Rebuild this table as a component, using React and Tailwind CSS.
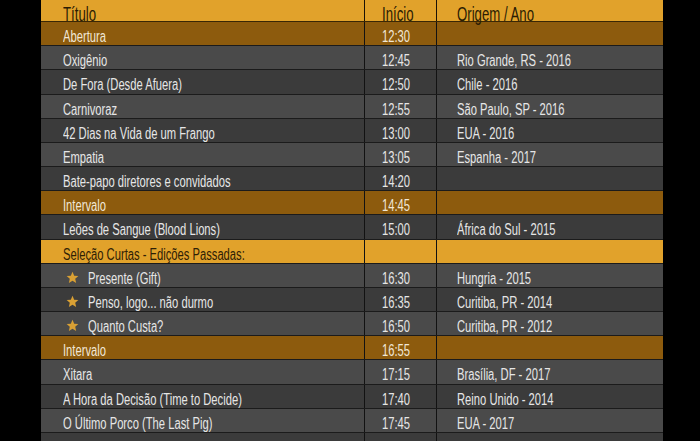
import React from "react";

const rows = [
  { t: "Abertura", h: "12:30", o: "", k: "brown" },
  { t: "Oxigênio", h: "12:45", o: "Rio Grande, RS - 2016", k: "light" },
  { t: "De Fora (Desde Afuera)", h: "12:50", o: "Chile - 2016", k: "dark" },
  { t: "Carnivoraz", h: "12:55", o: "São Paulo, SP - 2016", k: "light" },
  { t: "42 Dias na Vida de um Frango", h: "13:00", o: "EUA - 2016", k: "dark" },
  { t: "Empatia", h: "13:05", o: "Espanha - 2017", k: "light" },
  { t: "Bate-papo diretores e convidados", h: "14:20", o: "", k: "dark" },
  { t: "Intervalo", h: "14:45", o: "", k: "brown" },
  { t: "Leões de Sangue (Blood Lions)", h: "15:00", o: "África do Sul - 2015", k: "dark" },
  { t: "Seleção Curtas - Edições Passadas:", h: "", o: "", k: "gold" },
  { t: "Presente (Gift)", h: "16:30", o: "Hungria - 2015", k: "light", star: true },
  { t: "Penso, logo... não durmo", h: "16:35", o: "Curitiba, PR - 2014", k: "dark", star: true },
  { t: "Quanto Custa?", h: "16:50", o: "Curitiba, PR - 2012", k: "light", star: true },
  { t: "Intervalo", h: "16:55", o: "", k: "brown" },
  { t: "Xitara", h: "17:15", o: "Brasília, DF - 2017", k: "light" },
  { t: "A Hora da Decisão (Time to Decide)", h: "17:40", o: "Reino Unido - 2014", k: "dark" },
  { t: "O Último Porco (The Last Pig)", h: "17:45", o: "EUA - 2017", k: "light" },
  { t: "Debate com diretores e convidados", h: "18:10", o: "", k: "dark" },
];

const bg = {
  brown: "bg-[#8d5b0d] text-[#f1e7d6]",
  gold: "bg-[#e1a22b] text-[#2e2006]",
  light: "bg-[#4a4a4a] text-[#e6e6e6]",
  dark: "bg-[#3b3b3b] text-[#e6e6e6]",
};

function Star() {
  return (
    <svg width="13" height="13" viewBox="0 0 24 24" className="shrink-0">
      <polygon
        points="12,1.5 15.1,8.6 22.8,9.3 17,14.4 18.7,22 12,18 5.3,22 7,14.4 1.2,9.3 8.9,8.6"
        fill="#d9a034"
      />
    </svg>
  );
}

function T({ children, big }) {
  return (
    <span
      className={
        "inline-block whitespace-nowrap origin-left " +
        (big ? "text-[20px] scale-x-[0.66]" : "text-[16px] scale-x-[0.7]")
      }
    >
      {children}
    </span>
  );
}

export default function App() {
  return (
    <div
      className="w-[700px] h-[441px] bg-black overflow-hidden"
      style={{ fontFamily: '"Liberation Sans", Arial, sans-serif' }}
    >
      <div className="ml-[41px] w-[622px] -mt-[2px] flex flex-col">
        <div className="flex h-[24.17px] shrink-0 border-b border-[#3a2705] bg-[#e1a22b] text-[#2a1c04] leading-[20px]">
          <div className="w-[324px] border-r border-[#1a1206] pl-[22px] pt-[6px]">
            <T big>Título</T>
          </div>
          <div className="w-[72px] border-r border-[#1a1206] pl-[17px] pt-[6px]">
            <T big>Início</T>
          </div>
          <div className="flex-1 pl-[20px] pt-[6px]">
            <T big>Origem / Ano</T>
          </div>
        </div>
        {rows.map((r, i) => (
          <div
            key={i}
            className={
              "flex h-[24.17px] shrink-0 border-b border-[#1b1b1b] leading-[20px] " +
              bg[r.k]
            }
          >
            <div className="w-[324px] border-r border-[#121212] pl-[22px] pt-[5px] flex items-start">
              {r.star ? (
                <div className="flex items-start">
                  <div className="pl-[3px] pt-[2px] w-[25px]">
                    <Star />
                  </div>
                  <T>{r.t}</T>
                </div>
              ) : (
                <T>{r.t}</T>
              )}
            </div>
            <div className="w-[72px] border-r border-[#121212] pl-[17px] pt-[5px]">
              <T>{r.h}</T>
            </div>
            <div className="flex-1 pl-[20px] pt-[5px]">
              <T>{r.o}</T>
            </div>
          </div>
        ))}
      </div>
    </div>
  );
}
